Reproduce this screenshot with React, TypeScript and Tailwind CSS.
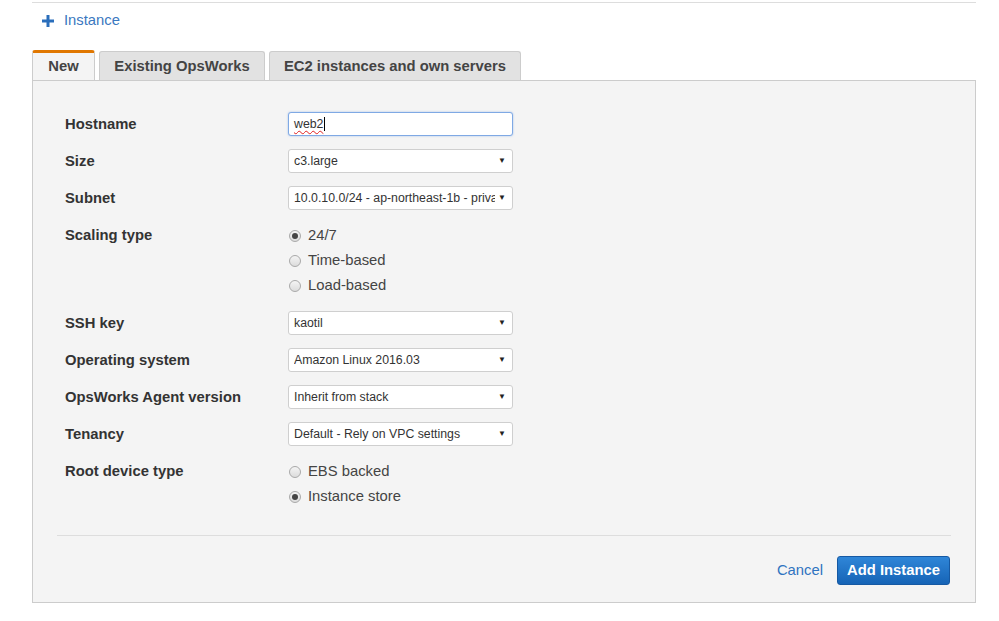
import React from 'react'

const font = { fontFamily: '"Liberation Sans", Arial, sans-serif' }

function Label({ children }: { children: React.ReactNode }) {
  return (
    <div className="w-[231px] pl-2 text-[14.8px] font-bold leading-[24px] text-[#333]">{children}</div>
  )
}

function Select({ value }: { value: string }) {
  return (
    <div className="flex h-[24px] w-[225px] items-center justify-between rounded-[3px] border border-[#cfcfcf] bg-white pl-[5px] pr-[6px] text-[12.3px] text-[#333]">
      <span className="min-w-0 flex-1 overflow-hidden whitespace-nowrap">{value}</span>
      <span className="ml-[3px] shrink-0 text-[8px] text-[#222]">▼</span>
    </div>
  )
}

function Radio({ label, checked }: { label: string; checked?: boolean }) {
  return (
    <div className="flex h-[25px] items-center gap-[7px] pl-[1px]">
      <span className="flex h-[12px] w-[12px] items-center justify-center rounded-full border border-[#a9a9a9] bg-gradient-to-b from-[#f4f4f4] to-[#dcdcdc]">
        {checked && <span className="h-[6px] w-[6px] rounded-full bg-[#444]" />}
      </span>
      <span className="text-[14.8px] text-[#444]">{label}</span>
    </div>
  )
}

export default function App() {
  return (
    <div className="min-h-[621px] bg-white" style={font}>
      <div className="ml-[32px] w-[944px] pt-[2px]">
        <div className="border-t border-[#dddddd]" />

        {/* add instance link */}
        <div className="flex h-[35px] items-center pl-[10px]">
          <svg width="12" height="12" viewBox="0 0 12 12" className="mr-[10px]">
            <path d="M4.5 0h3v4.5H12v3H7.5V12h-3V7.5H0v-3h4.5z" fill="#2a6ebb" />
          </svg>
          <span className="text-[14.8px] text-[#3b78c0]">Instance</span>
        </div>

        {/* tabs */}
        <div className="mt-[12px] flex h-[30px] items-end gap-[4px]">
          <div className="flex h-[30px] w-[63px] items-center justify-center rounded-t-[3px] border-x border-t-[3px] border-x-[#cccccc] border-t-[#e07700] bg-[#f4f4f4] text-[14.8px] font-bold text-[#444]">
            New
          </div>
          <div className="flex h-[29px] w-[166px] items-center justify-center rounded-t-[3px] border-x border-t border-[#cccccc] bg-[#e2e2e2] text-[14.8px] font-bold text-[#444]">
            Existing OpsWorks
          </div>
          <div className="flex h-[29px] w-[252px] items-center justify-center rounded-t-[3px] border-x border-t border-[#cccccc] bg-[#e2e2e2] text-[14.8px] font-bold text-[#444]">
            EC2 instances and own servers
          </div>
        </div>

        {/* panel */}
        <div className="border border-[#cccccc] bg-[#f4f4f4] px-[24px] pt-[31px] pb-[17px]">
          <div className="flex flex-col gap-[13px]">
            <div className="flex">
              <Label>Hostname</Label>
              <div className="flex h-[24px] w-[225px] items-center rounded-[3px] border border-[#7fa9e4] bg-white pl-[5px] text-[12.3px] text-[#333] shadow-[0_0_2px_rgba(102,153,230,0.6)]">
                <span className="underline decoration-wavy decoration-[#e02020] decoration-1 underline-offset-2">web2</span>
                <span className="ml-[1px] h-[14px] w-[1px] bg-black" />
              </div>
            </div>
            <div className="flex">
              <Label>Size</Label>
              <Select value="c3.large" />
            </div>
            <div className="flex">
              <Label>Subnet</Label>
              <Select value="10.0.10.0/24 - ap-northeast-1b - private" />
            </div>
            <div className="flex">
              <div className="w-[231px] pl-2 text-[14.8px] font-bold leading-[25px] text-[#333]">Scaling type</div>
              <div className="flex flex-col">
                <Radio label="24/7" checked />
                <Radio label="Time-based" />
                <Radio label="Load-based" />
              </div>
            </div>
            <div className="flex">
              <Label>SSH key</Label>
              <Select value="kaotil" />
            </div>
            <div className="flex">
              <Label>Operating system</Label>
              <Select value="Amazon Linux 2016.03" />
            </div>
            <div className="flex">
              <Label>OpsWorks Agent version</Label>
              <Select value="Inherit from stack" />
            </div>
            <div className="flex">
              <Label>Tenancy</Label>
              <Select value="Default - Rely on VPC settings" />
            </div>
            <div className="flex">
              <div className="w-[231px] pl-2 text-[14.8px] font-bold leading-[25px] text-[#333]">Root device type</div>
              <div className="flex flex-col">
                <Radio label="EBS backed" />
                <Radio label="Instance store" checked />
              </div>
            </div>
          </div>

          <div className="mt-[26px] border-t border-[#dddddd]" />

          <div className="mt-[20px] flex items-center justify-end gap-[14px] pr-[1px]">
            <span className="text-[14.8px] text-[#2f73c0]">Cancel</span>
            <button className="h-[29px] w-[113px] rounded-[3px] border border-[#1659a3] bg-gradient-to-b from-[#2f86d8] to-[#1664b6] text-[14.8px] font-bold text-white">
              Add Instance
            </button>
          </div>
        </div>
      </div>
    </div>
  )
}
